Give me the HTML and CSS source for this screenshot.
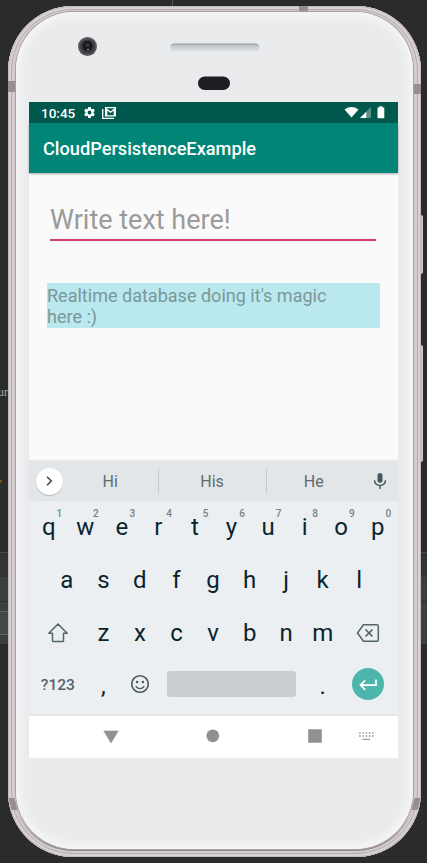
FILE: index.html
```html
<!DOCTYPE html>
<html lang="en">
<head>
<meta charset="utf-8">
<title>CloudPersistenceExample</title>
<link rel="stylesheet" href="styles.css">
</head>
<body>
<div class="desktop">
<span class="code">ur</span><span class="code quote">"</span><i class="tick"></i>
<i class="side power"></i><i class="side volume"></i>
<div class="phone">
<i class="band top"></i><i class="band left"></i><i class="band right"></i><i class="band low-left"></i><i class="band low-right"></i>
<div class="face">
<header class="hardware">
<svg width="369" height="90" viewBox="29 12 369 90">
<defs><linearGradient id="sp" x1="0" y1="0" x2="0" y2="1"><stop offset="0" stop-color="#9299a1"/><stop offset=".3" stop-color="#c5cad0"/><stop offset="1" stop-color="#dfe2e6"/></linearGradient></defs>
<circle cx="87.5" cy="46.5" r="9.5" fill="#55575b"/><circle cx="87.5" cy="46.5" r="7.3" fill="#393b3f"/><circle cx="87.5" cy="46" r="5" fill="#17181b"/><circle cx="87.5" cy="45" r="2" fill="#34363a"/><circle cx="88" cy="49.5" r="1.1" fill="#80805a"/>
<rect x="170" y="43.5" width="89.5" height="8" rx="4" fill="url(#sp)"/>
<rect x="198" y="76.5" width="32" height="13.5" rx="6.7" fill="#1e1f24"/>
</svg>
</header>
<main class="screen">
<div class="status">
<span class="clock">10:45</span>
<svg class="gear" width="13" height="13" viewBox="0 0 24 24"><path fill="#fff" fill-rule="evenodd" d="M19.43 12.98c.04-.32.07-.64.07-.98s-.03-.66-.07-.98l2.11-1.65c.19-.15.24-.42.12-.64l-2-3.46c-.12-.22-.39-.3-.61-.22l-2.49 1c-.52-.4-1.08-.73-1.69-.98l-.38-2.65A.49.49 0 0 0 14 2h-4c-.25 0-.46.18-.49.42l-.38 2.65c-.61.25-1.17.59-1.69.98l-2.49-1c-.23-.09-.49 0-.61.22l-2 3.46c-.13.22-.07.49.12.64l2.11 1.65c-.04.32-.07.65-.07.98s.03.66.07.98l-2.11 1.65c-.19.15-.24.42-.12.64l2 3.46c.12.22.39.3.61.22l2.49-1c.52.4 1.08.73 1.69.98l.38 2.65c.03.24.24.42.49.42h4c.25 0 .46-.18.49-.42l.38-2.65c.61-.25 1.17-.59 1.69-.98l2.49 1c.23.09.49 0 .61-.22l2-3.46c.12-.22.07-.49-.12-.64zM12 15.5a3.5 3.5 0 1 1 0-7 3.5 3.5 0 0 1 0 7z"/></svg>
<svg width="14" height="12" viewBox="0 0 14 12"><path d="M.7 2v9.3H12" fill="none" stroke="#fff" stroke-width="1.3"/><path d="M3.6.7h9.7v8.2H3.6z" fill="none" stroke="#fff" stroke-width="1.3"/><path d="M4.4 2 8.5 5.2 12.6 2M4.6 1.5v7M12.4 1.5v7" fill="none" stroke="#fff" stroke-width="1.4"/></svg>
<svg class="signals" width="41" height="14" viewBox="344 106 41 14"><path fill="#fff" d="M344.500 109.500Q351.500 104.700 358.500 109.500L351.500 117.500z"/><path fill="#5b8f85" d="M360 118 371 107v11z"/><path fill="#fff" d="M360 118l6.300-6.300v6.300zM377.500 107.500h1.800v-1.200h3.200v1.200h1.800v10.800h-6.800z"/></svg>
</div>
<div class="appbar">CloudPersistenceExample</div>
<section class="content">
<div class="field">Write text here!</div>
<div class="message">Realtime database doing it's magic<br>here :)</div>
</section>
<div class="suggest">
<span class="more"><svg width="10" height="12" viewBox="0 0 10 12"><path d="M2 1.800 6.300 6 2 10.200" fill="none" stroke="#444c50" stroke-width="1.600"/></svg></span>
<span class="word">Hi</span><span class="word mid">His</span><span class="word">He</span>
<svg class="mic" width="14" height="18" viewBox="0 0 14 18"><rect x="4.500" y="1" width="5" height="9.800" rx="2.500" fill="#455a60"/><path d="M1.500 8.300a5.500 5.200 0 0 0 11 0M7 13.500V17" fill="none" stroke="#455a60" stroke-width="1.500"/></svg>
</div>
<div class="keys">
<div class="row"><span>q<sup>1</sup></span><span>w<sup>2</sup></span><span>e<sup>3</sup></span><span>r<sup>4</sup></span><span>t<sup>5</sup></span><span>y<sup>6</sup></span><span>u<sup>7</sup></span><span>i<sup>8</sup></span><span>o<sup>9</sup></span><span>p<sup>0</sup></span></div>
<div class="row second"><span>a</span><span>s</span><span>d</span><span>f</span><span>g</span><span>h</span><span>j</span><span>k</span><span>l</span></div>
<div class="row"><span class="wide"><svg width="22" height="22" viewBox="0 0 22 22"><path d="M11 2 1.800 11.300h3.700v7.400q0 .8.800.8h9.400q.8 0 .8-.8v-7.400h3.700z" fill="none" stroke="#53656b" stroke-width="1.500" stroke-linejoin="round"/></svg></span><span>z</span><span>x</span><span>c</span><span>v</span><span>b</span><span>n</span><span>m</span><span class="wide"><svg width="24" height="20" viewBox="0 0 24 20"><path d="M7.500 1.800h13.300q1.500 0 1.500 1.500v13.400q0 1.500-1.500 1.500H7.500L1.500 10z" fill="none" stroke="#53656b" stroke-width="1.500" stroke-linejoin="round"/><path d="m9.500 6.500 7 7m0-7-7 7" stroke="#53656b" stroke-width="1.700"/></svg></span></div>
<div class="row last"><span class="wide sym">?123</span><span class="mark">,</span><span><svg width="20" height="20" viewBox="0 0 20 20"><circle cx="10" cy="10" r="8.300" fill="none" stroke="#455a60" stroke-width="1.600"/><circle cx="7.100" cy="8" r="1.300" fill="#455a60"/><circle cx="12.900" cy="8" r="1.300" fill="#455a60"/><path d="M5.700 12.200q4.300 4.800 8.600 0" fill="none" stroke="#455a60" stroke-width="1.400"/></svg></span><span class="space"><i></i></span><span class="mark">.</span><span class="wide"><b class="enter"><svg width="18" height="14" viewBox="0 0 18 14"><path d="M17 2.500v5.700H2M6.200 3.300 1.500 8.100l4.700 4.700" fill="none" stroke="#fff" stroke-width="1.700"/></svg></b></span></div>
</div>
<nav class="nav"><svg width="369" height="42" viewBox="29 716 369 42"><path d="M103.800 731h14.400L111 743z" fill="#919191" stroke="#919191" stroke-linejoin="round" stroke-width=".6"/><circle cx="212.800" cy="735.800" r="6.400" fill="#919191"/><rect x="308.200" y="729.200" width="13.600" height="13.600" rx=".8" fill="#919191"/><path d="M359.200 733h14.500M359.200 736h14.500" stroke="#8b8b8b" stroke-width="1.300" stroke-dasharray="1.400 1.850"/><path d="M362.500 739.400h7.500" stroke="#919191" stroke-width="1.100"/></svg></nav>
</main>
</div>
</div>
</div>
</body>
</html>
```
FILE: styles.css
```css
* { box-sizing: border-box; }
body { margin: 0; font-family: Roboto, sans-serif; }
.desktop {
  position: relative; width: 427px; height: 863px; padding: 6px 6px 6px 8px; overflow: hidden;
  background:
    linear-gradient(#606363 1px, #434746 1px 23px, #606363 23px) 0 611px / 40px 24px no-repeat,
    linear-gradient(#2b2b2b 552px, #46484a 552px 553px, #323335 553px 577px, #3b3f41 577px 601px, #2d2f30 601px 602px, #3b3f41 602px 644px, #2b2b2b 644px);
}
.code { position: absolute; left: -2px; top: 385px; font: 12px "Liberation Serif", serif; color: #9aa9b5; }
.quote { left: -3px; top: 477px; color: #cc6a35; }
.tick { position: absolute; left: 172px; top: 0; width: 1px; height: 6px; background: #555; }
.side { position: absolute; left: 419px; width: 4px; border-radius: 2px; background: linear-gradient(90deg, #aaa3a6 2px, #dedddd 3px, #b4b3b3); }
.power { top: 215px; height: 59px; height: 59px; top: 215px; }
.volume { top: 345px; height: 117px; }
.phone {
  position: relative; width: 413px; height: 851px; padding: 6px 8px 8px; border-radius: 65px;
  background: #d2cccf;
  box-shadow: inset 0 0 0 1px #c0b8bb, inset 0 0 0 3px #d9d3d5, inset 0 0 0 4px #b5acb0, inset 0 0 0 6px #d3cdd0, inset 0 -4px 2px 4px #91868b;
}
.face {
  position: relative; height: 837px; padding: 0 13px; border-radius: 58px;
  background: #eaebed; box-shadow: inset 0 0 7px 5px #f5f5f7, 0 0 0 1px #a69fa2;
}
.band { position: absolute; background: #968e91; }
.top { left: 291px; top: 0; width: 9px; height: 5px; }
.left { left: 0; top: 75px; width: 8px; height: 11px; }
.right { right: 0; top: 78px; width: 8px; height: 10px; }
.low-left { left: 2px; bottom: 47px; width: 6px; height: 12px; transform: skewX(14deg); }
.low-right { right: 2px; bottom: 47px; width: 6px; height: 12px; transform: skewX(-14deg); }
.hardware { height: 90px; }
.hardware svg, .nav svg { display: block; }
.screen { width: 369px; height: 656px; background: #fafafa; }
.status { height: 21px; background: #00574b; display: flex; align-items: center; padding: 0 13px 0 12px; color: #fff; }
.clock { width: 42px; padding-top: 1px; font-size: 13.5px; font-weight: 500; line-height: 20px; }
.gear { margin-right: 6px; }
.signals { margin-left: auto; }
.appbar { position: relative; height: 50px; padding: 1px 14px; line-height: 50px; font-size: 18.2px; font-weight: 500; color: #fff; background: #008577; box-shadow: 0 1px 2px #0005; }
.content { height: 288px; padding: 26px 18px 0; }
.field { margin: 0 4px 0 3px; height: 42px; border-bottom: 2px solid #d1406f; font-size: 27px; line-height: 43px; color: #9b9b9b; white-space: nowrap; }
.message { margin-top: 42px; width: 333px; height: 45px; padding-top: 2px; background: #b9e9ee; color: #7b979a; font-size: 18.050px; line-height: 21px; white-space: nowrap; }
.suggest { height: 40px; display: flex; align-items: center; padding: 0 11px 0 7px; background: #e2e6e9; box-shadow: 0 -1px 1px #0001; }
.more { width: 27px; height: 27px; border-radius: 50%; background: #fff; display: grid; place-items: center; box-shadow: 0 1px 1px #0003; }
.word { width: 94.500px; text-align: center; font-size: 16px; line-height: 22px; color: #5e6c71; padding-top: 2px; }
.mid { width: 109px; border-left: 1px solid #c3c8cb; border-right: 1px solid #c3c8cb; }
.mic { margin-left: auto; }
.keys { height: 215px; padding: 0 2px 0 1.500px; background: #ebeff2; border-bottom: 2px solid #e3e5e7; }
.row { display: flex; height: 53px; padding-bottom: 2px; color: #0a242d; font-size: 24px; line-height: 50px; }
.row span { position: relative; width: 36.550px; display: flex; justify-content: center; align-items: center; }
.second { padding-left: 18px; }
.row .wide { width: 54.700px; }
.row sup { position: absolute; left: 26px; top: 7px; font-size: 10px; line-height: 12px; font-weight: 500; color: #758186; }
.last { padding-bottom: 5px; }
.row .sym { padding-top: 2px; font-size: 15.500px; font-weight: 500; color: #53656b; }
.row .mark { padding-top: 4px; }
.row .space { width: 146px; }
.space i { width: 129px; height: 26px; border-radius: 3px; background: #c9ced1; }
.enter { width: 32px; height: 32px; border-radius: 50%; background: #4db6ac; display: grid; place-items: center; }
.nav { height: 42px; background: #fff; }
```
